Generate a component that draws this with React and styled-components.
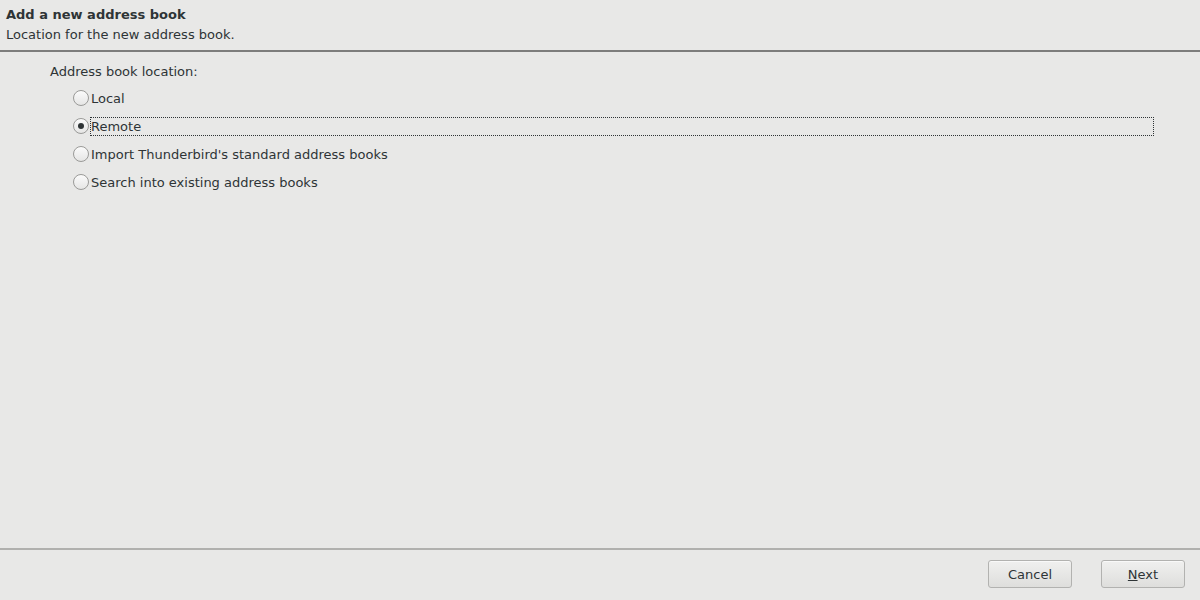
import React, { useState } from "react";
import styled, { createGlobalStyle } from "styled-components";

const GlobalStyle = createGlobalStyle`
  html, body {
    margin: 0;
    padding: 0;
    height: 100%;
  }
  body {
    background: #e8e8e7;
    font-family: "DejaVu Sans", "Liberation Sans", sans-serif;
    font-size: 13px;
    color: #2e3436;
  }
  #root {
    height: 100%;
  }
`;

const Window = styled.div`
  width: 1200px;
  height: 600px;
  display: flex;
  flex-direction: column;
  background: #e8e8e7;
`;

const Header = styled.div`
  height: 52px;
  box-sizing: border-box;
  padding: 6px 6px 0;
  border-bottom: 2px solid #7d7d7c;
  display: flex;
  flex-direction: column;
  gap: 3px;
`;

const Title = styled.div`
  font-weight: bold;
  line-height: 17px;
`;

const Subtitle = styled.div`
  line-height: 17px;
`;

const Body = styled.div`
  flex: 1;
  padding: 11px 47px 0 50px;
`;

const GroupLabel = styled.div`
  line-height: 17px;
  margin-bottom: 4px;
`;

const Options = styled.div`
  display: flex;
  flex-direction: column;
  padding-left: 23px;
`;

const Option = styled.label`
  display: flex;
  align-items: center;
  height: 28px;
  cursor: default;
`;

const Circle = styled.span`
  width: 14px;
  height: 14px;
  border-radius: 50%;
  border: 1px solid #9a9a98;
  background: linear-gradient(#fbfbfb, #e6e6e5);
  display: flex;
  align-items: center;
  justify-content: center;
  flex-shrink: 0;
  &::after {
    content: "";
    width: 6px;
    height: 6px;
    border-radius: 50%;
    background: #2e3436;
    display: ${(p) => (p.$checked ? "block" : "none")};
  }
`;

const OptionText = styled.span`
  flex: ${(p) => (p.$focused ? 1 : "none")};
  line-height: 17px;
  padding: 0;
  margin-left: 2px;
  outline: ${(p) => (p.$focused ? "1px dotted #2e3436" : "none")};
`;

const Footer = styled.div`
  height: 52px;
  box-sizing: border-box;
  border-top: 2px solid #b0b0ae;
  display: flex;
  justify-content: flex-end;
  align-items: flex-start;
  gap: 29px;
  padding: 10px 15px 0 0;
`;

const Button = styled.button`
  width: 84px;
  height: 28px;
  padding: 0;
  border: 1px solid #b2b2b0;
  border-radius: 3px;
  background: linear-gradient(#f0f0ef, #dededc);
  font-family: "DejaVu Sans", "Liberation Sans", sans-serif;
  font-size: 13px;
  color: #2e3436;
  box-shadow: 0 1px 0 rgba(255, 255, 255, 0.6) inset;
  u {
    text-decoration: underline;
  }
`;

const options = [
  "Local",
  "Remote",
  "Import Thunderbird's standard address books",
  "Search into existing address books",
];

export default function App() {
  const [selected, setSelected] = useState(1);
  return (
    <Window>
      <GlobalStyle />
      <Header>
        <Title>Add a new address book</Title>
        <Subtitle>Location for the new address book.</Subtitle>
      </Header>
      <Body>
        <GroupLabel>Address book location:</GroupLabel>
        <Options>
          {options.map((o, i) => (
            <Option key={o} onClick={() => setSelected(i)}>
              <Circle $checked={selected === i} />
              <OptionText $focused={selected === i}>{o}</OptionText>
            </Option>
          ))}
        </Options>
      </Body>
      <Footer>
        <Button>Cancel</Button>
        <Button>
          <u>N</u>ext
        </Button>
      </Footer>
    </Window>
  );
}
